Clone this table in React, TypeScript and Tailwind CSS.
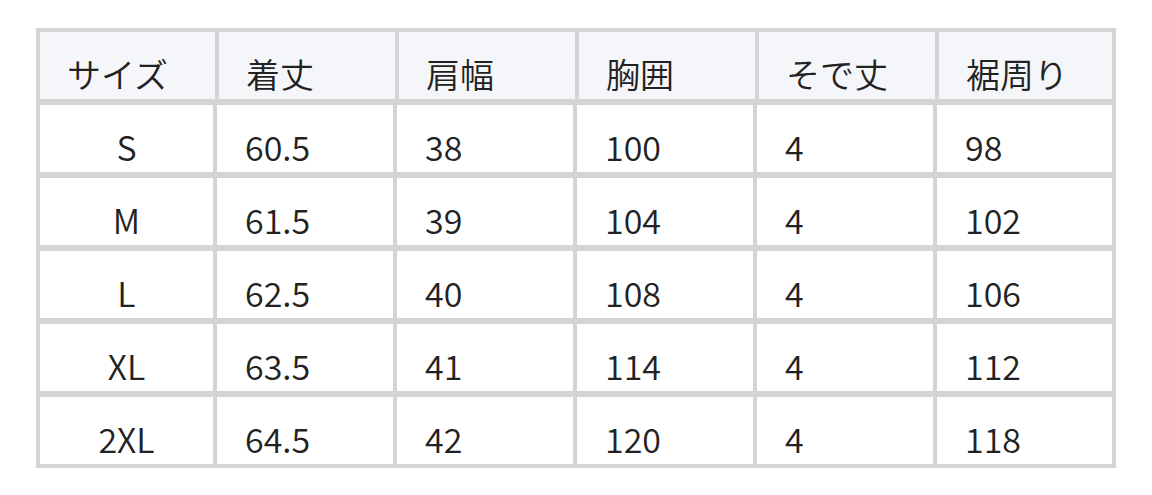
import * as React from "react";

const headers = ["サイズ", "着丈", "肩幅", "胸囲", "そで丈", "裾周り"];

const rows: string[][] = [
  ["S", "60.5", "38", "100", "4", "98"],
  ["M", "61.5", "39", "104", "4", "102"],
  ["L", "62.5", "40", "108", "4", "106"],
  ["XL", "63.5", "41", "114", "4", "112"],
  ["2XL", "64.5", "42", "120", "4", "118"],
];

export default function App() {
  return (
    <div className="w-[1152px] h-[495px] bg-white pt-[28px] pl-[36px] font-['Noto_Sans_CJK_JP','Noto_Sans',sans-serif] font-[350] text-[34px] leading-[50px] text-[#222222]">
      <div className="w-fit bg-[#d4d4d4] p-[4px] flex flex-col gap-[6px]">
        {/* Header row */}
        <div className="grid grid-cols-[175px_176px_176px_176px_176px_173px] gap-x-[4px]">
          {headers.map((h) => (
            <div key={h} className="h-[67px] bg-[#f5f6fa] pl-[27px] pt-[17px] whitespace-nowrap">
              {h}
            </div>
          ))}
        </div>

        {/* Body rows */}
        {rows.map((row) => (
          <div key={row[0]} className="grid grid-cols-[173px_176px_176px_176px_176px_175px] gap-x-[4px]">
            {row.map((cell, i) => (
              <div
                key={i}
                className={
                  i === 0
                    ? "h-[67px] bg-white pt-[17px] text-center"
                    : "h-[67px] bg-white pl-[28px] pt-[17px]"
                }
              >
                {cell}
              </div>
            ))}
          </div>
        ))}
      </div>
    </div>
  );
}
